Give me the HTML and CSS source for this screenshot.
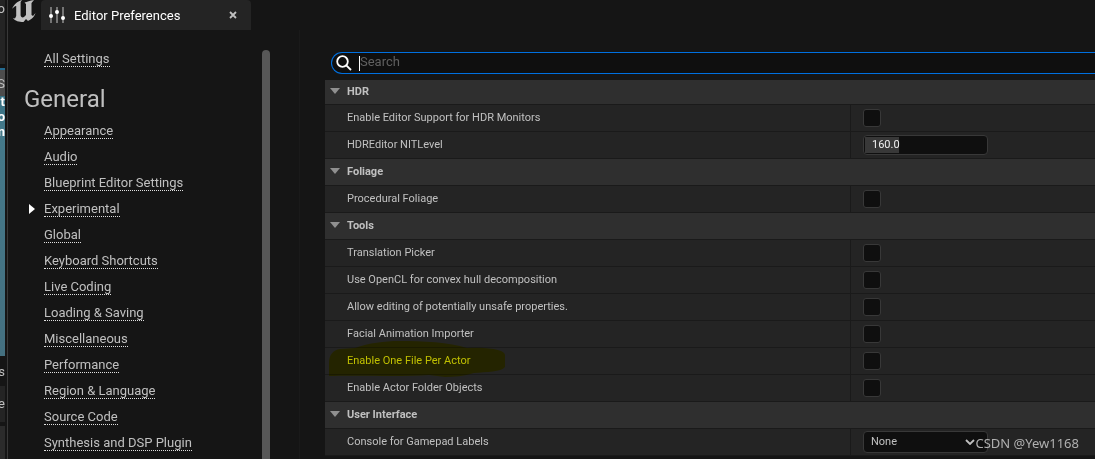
FILE: index.html
```html
<!DOCTYPE html>
<html lang="en">
<head>
<meta charset="utf-8">
<title>Editor Preferences</title>
<link rel="stylesheet" href="styles.css">
</head>
<body>
<div class="desktop">
  <div class="behind" aria-hidden="true">
    <div class="behind-top">o</div>
    <div class="behind-tile"><span class="behind-s">S</span><b>t</b><b>o</b><b>n</b></div>
    <div class="behind-status">s</div>
    <div class="behind-panel">e</div>
    <div class="behind-foot"></div>
  </div>
  <div class="window">
    <header class="titlebar">
      <svg class="logo" viewBox="0 0 24 23" aria-hidden="true">
        <path d="M0 9C2 4 6 1 10 0L8.600 2V15C8.600 17 10.500 18 12 17L14 15V4L12.500 2.500C15 2.500 18 0 22 0L19.500 3V15L21 16L23.500 13C22 18 18 20 16 21L14 19L11.500 22C7 22 3 21 1 18L3 18.500L4.200 16V6C2.500 6 1 8 0 9Z"/>
      </svg>
      <div class="tab">
        <svg class="sliders" viewBox="0 0 16 16" aria-hidden="true">
          <path class="rail" d="M2 0V16M8 0V16M14 0V16"/>
          <circle cx="2" cy="9" r="2"/><circle cx="8" cy="5" r="2"/><circle cx="14" cy="11" r="2"/>
        </svg>
        <span class="tab-title">Editor Preferences</span>
        <button class="close" type="button" aria-label="Close tab"><svg viewBox="0 0 8 8"><path d="M1 1L7 7M7 1L1 7"/></svg></button>
      </div>
    </header>
    <div class="content">
      <nav class="sidebar">
        <div class="nav-scroll">
          <a class="nav-link" href="#all">All Settings</a>
          <h1 class="nav-heading">General</h1>
          <ul class="nav-list">
            <li><a class="nav-link" href="#appearance">Appearance</a></li>
            <li><a class="nav-link" href="#audio">Audio</a></li>
            <li><a class="nav-link" href="#blueprint">Blueprint Editor Settings</a></li>
            <li class="current"><a class="nav-link" href="#experimental" aria-current="page">Experimental</a></li>
            <li><a class="nav-link" href="#global">Global</a></li>
            <li><a class="nav-link" href="#keyboard">Keyboard Shortcuts</a></li>
            <li><a class="nav-link" href="#live">Live Coding</a></li>
            <li><a class="nav-link" href="#loading">Loading &amp; Saving</a></li>
            <li><a class="nav-link" href="#misc">Miscellaneous</a></li>
            <li><a class="nav-link" href="#performance">Performance</a></li>
            <li><a class="nav-link" href="#region">Region &amp; Language</a></li>
            <li><a class="nav-link" href="#source">Source Code</a></li>
            <li><a class="nav-link" href="#synthesis">Synthesis and DSP Plugin</a></li>
          </ul>
        </div>
        <div class="thumb"></div>
      </nav>
      <main class="details">
        <label class="search">
          <svg viewBox="0 0 16 16" aria-hidden="true"><circle cx="6.500" cy="6.500" r="5.300"/><path d="M10.300 10.300L15 15"/></svg>
          <span class="caret"></span>
          <input type="search" placeholder="Search" aria-label="Search">
        </label>
        <div class="grid">
          <h2 class="group"><svg viewBox="0 0 10 6"><path d="M0 0H10L5 6Z"/></svg>HDR</h2>
          <div class="row"><label for="hdr">Enable Editor Support for HDR Monitors</label><div class="value"><input id="hdr" class="check" type="checkbox"></div></div>
          <div class="row"><label for="nit">HDREditor NITLevel</label><div class="value"><input id="nit" class="number" type="text" value="160.0"></div></div>
          <h2 class="group"><svg viewBox="0 0 10 6"><path d="M0 0H10L5 6Z"/></svg>Foliage</h2>
          <div class="row"><label for="foliage">Procedural Foliage</label><div class="value"><input id="foliage" class="check" type="checkbox"></div></div>
          <h2 class="group"><svg viewBox="0 0 10 6"><path d="M0 0H10L5 6Z"/></svg>Tools</h2>
          <div class="row"><label for="picker">Translation Picker</label><div class="value"><input id="picker" class="check" type="checkbox"></div></div>
          <div class="row"><label for="opencl">Use OpenCL for convex hull decomposition</label><div class="value"><input id="opencl" class="check" type="checkbox"></div></div>
          <div class="row"><label for="unsafe">Allow editing of potentially unsafe properties.</label><div class="value"><input id="unsafe" class="check" type="checkbox"></div></div>
          <div class="row"><label for="facial">Facial Animation Importer</label><div class="value"><input id="facial" class="check" type="checkbox"></div></div>
          <div class="row"><label for="ofpa">Enable One File Per Actor</label><div class="value"><input id="ofpa" class="check" type="checkbox"></div>
            <svg class="marker" viewBox="0 0 176 36" aria-hidden="true"><path d="M0 22C0 14 4 9 11 8L26 7C40 2 55 0 70 0C95 0 120 1 138 7C155 6 176 8 176 14V26C172 31 158 31 145 32C135 35 125 36 116 36L100 34C70 36 30 34 0 35Z"/></svg>
          </div>
          <div class="row"><label for="folders">Enable Actor Folder Objects</label><div class="value"><input id="folders" class="check" type="checkbox"></div></div>
          <h2 class="group"><svg viewBox="0 0 10 6"><path d="M0 0H10L5 6Z"/></svg>User Interface</h2>
          <div class="row"><label for="console">Console for Gamepad Labels</label><div class="value"><div class="dropdown"><select id="console"><option>None</option></select><svg viewBox="0 0 10 6" aria-hidden="true"><path d="M1 1L5 5L9 1"/></svg></div></div></div>
        </div>
      </main>
    </div>
  </div>
  <div class="watermark">CSDN @Yew1168</div>
</div>
</body>
</html>
```
FILE: styles.css
```css
* { box-sizing: border-box; }
body {
  margin: 0;
  background: #151515;
  color: #c0c0c0;
  font-family: Roboto, "Liberation Sans", sans-serif;
  font-size: 13px;
  overflow: hidden;
}
input, select, button { font: inherit; color: inherit; }
.desktop { position: relative; display: flex; height: 100vh; }

.behind {
  flex: 0 0 5px;
  display: flex;
  flex-direction: column;
  overflow: hidden;
  line-height: 18px;
  background: #151515;
}
.behind-top { height: 64px; background: #242424; direction: rtl; }
.behind-tile {
  display: flex;
  flex-direction: column;
  align-items: flex-end;
  height: 288px;
  margin-top: 4px;
  border-top: 2px solid #246b91;
  background: linear-gradient(#4c4c4c 26px, #367083 26px, #44798a 60px, #447080);
  line-height: 15px;
}
.behind-tile b { color: #fff; }
.behind-s { padding-top: 4px; line-height: 20px; }
.behind-status { height: 30px; line-height: 32px; direction: rtl; }
.behind-panel { height: 36px; line-height: 36px; background: #242424; direction: rtl; }
.behind-foot { flex: 1; margin-top: 4px; background: #2b2b2b; }

.window {
  flex: 1;
  min-width: 0;
  display: flex;
  flex-direction: column;
  margin-left: 2px;
  border-left: 1px solid #383838;
}
.titlebar { display: flex; flex: 0 0 30px; padding-left: 4px; }
.logo { width: 24px; height: 23px; fill: #c0c0c0; }
.tab {
  display: flex;
  align-items: center;
  width: 210px;
  margin-left: 5px;
  padding: 0 12px 0 8px;
  background: #242424;
  border-radius: 4px 4px 0 0;
  color: #fff;
}
.sliders { width: 16px; height: 16px; fill: #fff; }
.rail { stroke: #909090; stroke-width: 1.500; }
.tab-title { flex: 1; margin-left: 9px; }
.close { display: flex; padding: 2px; border: 0; background: none; }
.close svg { width: 8px; height: 8px; stroke: #c0c0c0; stroke-width: 1.800; }

.content { flex: 1; min-height: 0; display: flex; }
.sidebar {
  flex: 0 0 292px;
  display: flex;
  border-right: 1px solid #1a1a1a;
  padding-top: 20px;
}
.nav-scroll { flex: 0 0 254px; padding: 1px 0 0 36px; line-height: 15px; }
.nav-link {
  display: inline-block;
  color: #c0c0c0;
  text-decoration: none;
  border-bottom: 1px dotted #e0e0e0;
}
.nav-heading {
  margin: 18px 0 10px -20px;
  font-size: 24px;
  font-weight: 400;
  line-height: 28px;
}
.nav-list { margin: 0; padding: 0; list-style: none; }
.nav-list li { display: flex; align-items: flex-start; height: 26px; }
.current::before {
  content: "";
  margin: 3px 9px 0 -15px;
  border: 5px solid transparent;
  border-left: 6px solid #fff;
  border-right: 0;
}
.thumb { width: 8px; background: #575757; border-radius: 4px 4px 0 0; }

.details {
  flex: 1;
  min-width: 0;
  display: flex;
  flex-direction: column;
  padding: 22px 0 0 25px;
}
.search {
  display: flex;
  align-items: center;
  flex: 0 0 22px;
  margin: 0 0 6px 6px;
  padding-left: 4px;
  border: 1px solid #0070e0;
  border-right: 0;
  border-radius: 11px 0 0 11px;
  background: #0f0f0f;
}
.search svg { width: 16px; height: 16px; fill: none; stroke: #fff; stroke-width: 1.800; }
.caret { width: 1px; height: 15px; margin-left: 7px; background: #fff; }
.search input { flex: 1; min-width: 0; padding: 0 0 3px; border: 0; outline: 0; background: none; }
.search input::placeholder { color: #606060; opacity: 1; }

.grid { flex: 1; min-height: 0; overflow: hidden; font-size: 11px; }
.group, .row { height: 27px; border-bottom: 1px solid #1a1a1a; }
.group {
  display: flex;
  align-items: center;
  gap: 7px;
  margin: 0;
  padding: 0 0 2px 5px;
  background: #2f2f2f;
  font-size: 11px;
  font-weight: 700;
}
.group:first-child { height: 25px; }
.group svg { width: 10px; height: 6px; fill: #909090; }
.row {
  position: relative;
  display: grid;
  grid-template-columns: 15fr 7fr;
  background: #242424;
}
.row label { padding: 6px 0 0 22px; line-height: 13px; }
.value { display: flex; align-items: center; padding-left: 12px; border-left: 1px solid #1a1a1a; }
.check {
  appearance: none;
  width: 18px;
  height: 18px;
  margin: 0;
  border: 1px solid #383838;
  border-radius: 3px;
  background: #0f0f0f;
}
.number {
  width: 125px;
  height: 20px;
  padding: 0 8px 2px;
  border: 1px solid #383838;
  border-radius: 4px;
  outline: 0;
  background: linear-gradient(#383838, #383838) 1px 1px / 34px 16px no-repeat #0f0f0f;
  color: #f0f0f0;
}
.dropdown { display: flex; align-items: center; }
.dropdown select {
  appearance: none;
  width: 125px;
  height: 22px;
  padding: 0 7px 2px;
  border: 1px solid #383838;
  border-radius: 4px;
  background: #0f0f0f;
}
.dropdown svg {
  width: 10px;
  height: 6px;
  margin-left: -23px;
  fill: none;
  stroke: #c0c0c0;
  stroke-width: 1.800;
  pointer-events: none;
}
.marker {
  position: absolute;
  left: 4px;
  top: -7px;
  z-index: 1;
  width: 176px;
  height: 36px;
  fill: #ffff00;
  mix-blend-mode: multiply;
  pointer-events: none;
}
.watermark {
  position: absolute;
  right: 16px;
  bottom: 7px;
  z-index: 2;
  font-family: "Noto Sans", sans-serif;
  font-size: 13px;
  line-height: 17px;
  color: #b0b0b0;
}
```
